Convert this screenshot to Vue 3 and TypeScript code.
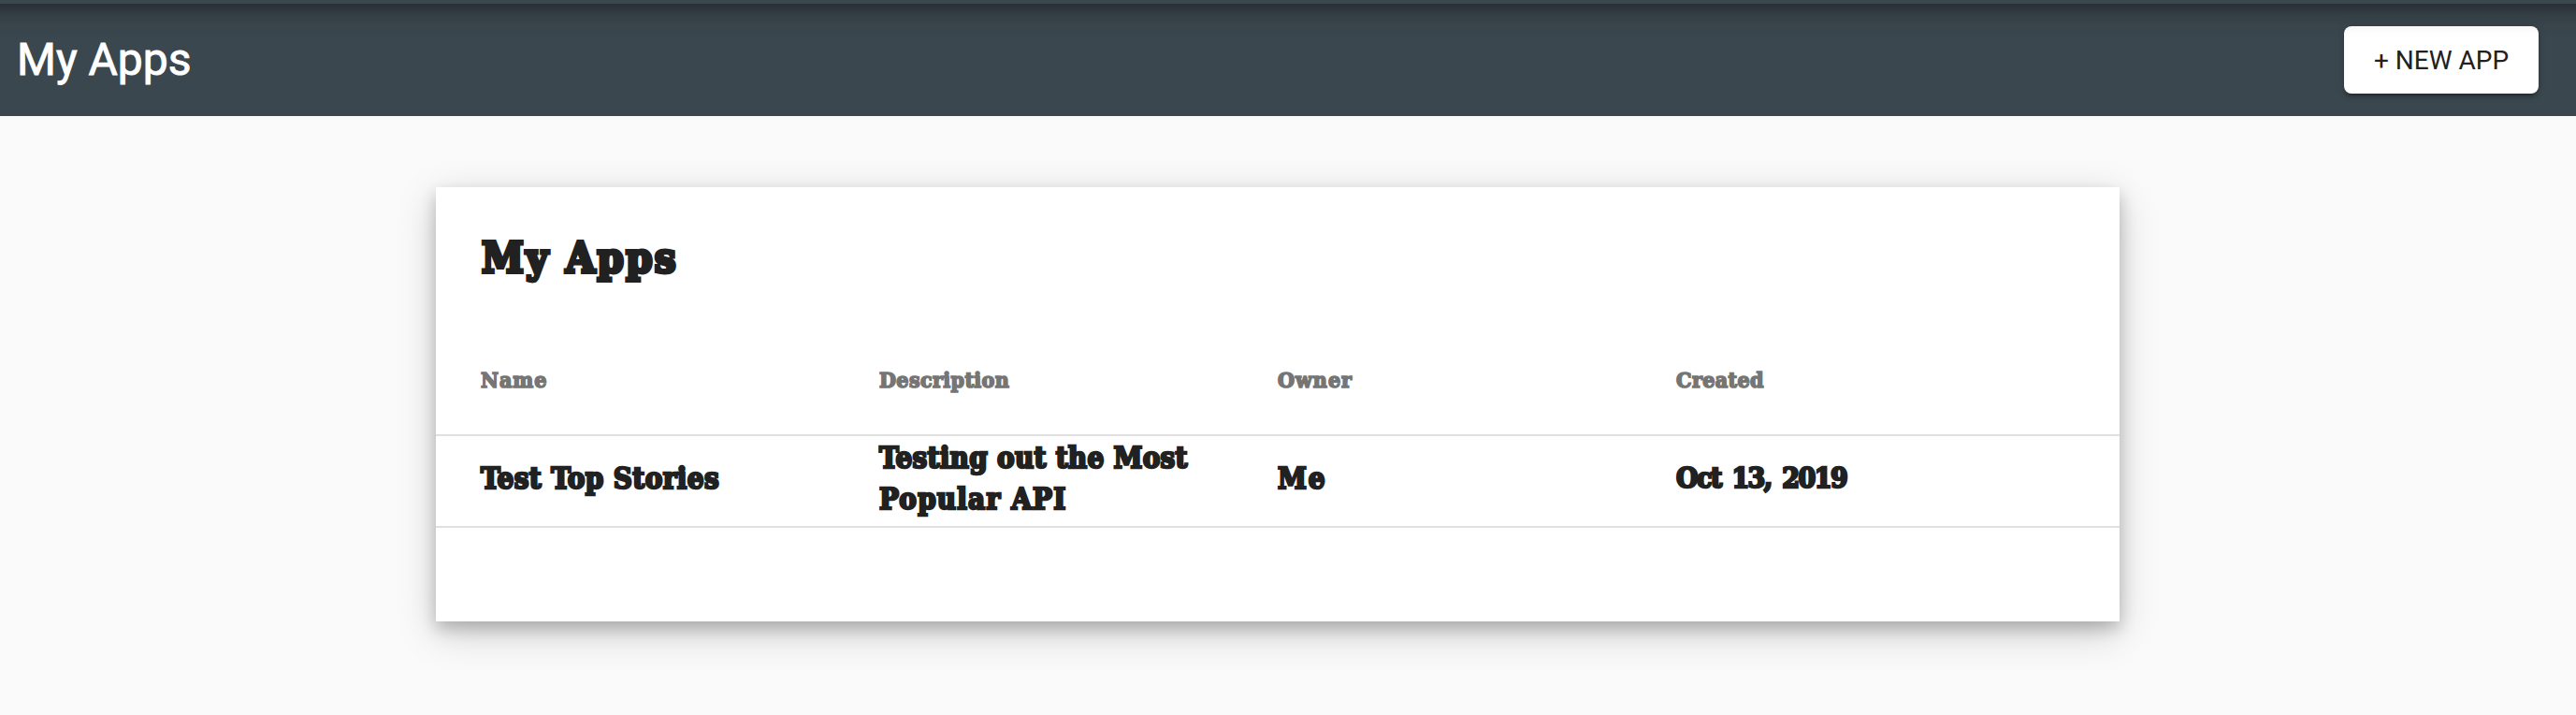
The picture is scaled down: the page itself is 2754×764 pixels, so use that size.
<script setup lang="ts">
interface AppRow {
  name: string
  description: string
  owner: string
  created: string
}

const columns: { key: keyof AppRow; label: string }[] = [
  { key: 'name', label: 'Name' },
  { key: 'description', label: 'Description' },
  { key: 'owner', label: 'Owner' },
  { key: 'created', label: 'Created' },
]

const rows: AppRow[] = [
  {
    name: 'Test Top Stories',
    description: 'Testing out the Most Popular API',
    owner: 'Me',
    created: 'Oct 13, 2019',
  },
]
</script>

<template>
  <div class="page">
    <div class="app-bar"></div>
    <header class="toolbar">
      <h1 class="heading">My Apps</h1>
      <button class="new-app" type="button">+ NEW APP</button>
    </header>
    <main class="card">
      <h2 class="title">My Apps</h2>
      <div class="row head">
        <div v-for="c in columns" :key="c.key" class="cell" :class="c.key">{{ c.label }}</div>
      </div>
      <div v-for="r in rows" :key="r.name" class="row body">
        <div v-for="c in columns" :key="c.key" class="cell" :class="c.key">{{ r[c.key] }}</div>
      </div>
    </main>
  </div>
</template>

<style>
body {
  background: #fafafa;
}
</style>

<style scoped>
.page {
  display: flow-root;
  height: 764px;
  overflow: hidden;
  background: #fafafa;
  font-family: Roboto, sans-serif;
  color: #212121;
}

/* Main bar, scrolled up so that only its lower edge and shadow remain */
.app-bar {
  position: relative;
  z-index: 1;
  height: 128px;
  margin: -124px -60px 0;
  background: #3b474e;
  box-shadow:
    0 6px 10px -2px rgba(0, 0, 0, 0.2),
    0 12px 20px 0 rgba(0, 0, 0, 0.14),
    0 2px 36px 0 rgba(0, 0, 0, 0.12);
}

.toolbar {
  height: 120px;
  box-sizing: border-box;
  padding: 0 40px 0 18px;
  display: flex;
  align-items: center;
  justify-content: space-between;
  background: #3b474e;
}

.heading {
  margin: 0 0 2px;
  font-size: 48px;
  font-weight: 400;
  color: #fff;
  -webkit-text-stroke: 0.9px currentColor;
}

.new-app {
  width: 208px;
  height: 72px;
  padding: 0;
  border: 0;
  border-radius: 8px;
  background: #fff;
  color: #212121;
  font: 400 28px Roboto, sans-serif;
  box-shadow:
    0 6px 2px -4px rgba(0, 0, 0, 0.2),
    0 4px 4px 0 rgba(0, 0, 0, 0.14),
    0 2px 10px 0 rgba(0, 0, 0, 0.12);
}

.card {
  width: 1800px;
  height: 464px;
  margin: 76px 0 0 466px;
  background: #fff;
  box-shadow:
    0 8px 16px 0 rgba(0, 0, 0, 0.2),
    0 12px 40px 0 rgba(0, 0, 0, 0.19);
  font-family: "DejaVu Serif Condensed", "DejaVu Serif", serif;
  font-weight: 700;
  font-stretch: condensed;
}

.title {
  margin: 0;
  height: 154px;
  box-sizing: border-box;
  padding: 44px 49px 0;
  font-size: 45px;
  line-height: 64px;
  letter-spacing: 2.4px;
  -webkit-text-stroke: 3.8px currentColor;
}

.row {
  display: grid;
  grid-template-columns: repeat(4, 426px);
  padding: 0 48px;
  box-sizing: border-box;
  align-items: center;
  border-bottom: 2px solid #e0e0e0;
}

.head {
  height: 112px;
  padding-bottom: 7px;
  font-size: 23px;
  color: #757575;
  letter-spacing: 1px;
  -webkit-text-stroke: 1.6px currentColor;
}

.head .description,
.head .created {
  letter-spacing: 0.4px;
}

.body {
  height: 98px;
  padding-bottom: 6px;
  font-size: 31px;
  line-height: 44px;
  letter-spacing: 0.4px;
  -webkit-text-stroke: 2.4px currentColor;
}

.body .description {
  letter-spacing: 1.2px;
}

.body .description::first-line {
  letter-spacing: 0.3px;
}

.body .owner {
  letter-spacing: 1.8px;
}

.body .created {
  font-size: 30px;
  letter-spacing: -1.6px;
  word-spacing: 4px;
}
</style>
